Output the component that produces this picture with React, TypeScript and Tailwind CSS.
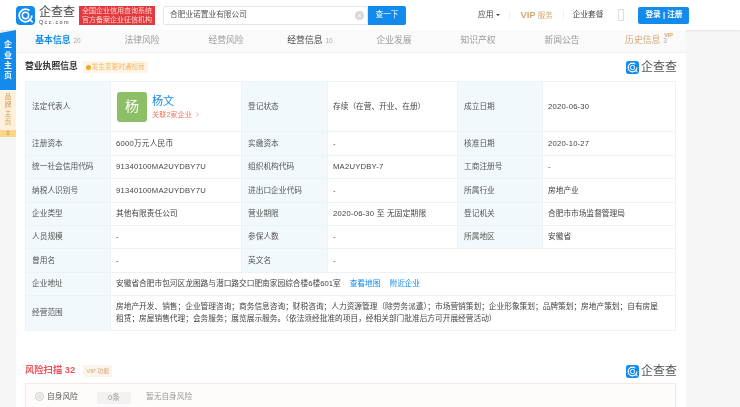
import { ChevronRight } from 'lucide-react';

const FONT = "font-['Liberation_Sans','Noto_Sans_CJK_SC',sans-serif]";

function QccMark({ className }: { className: string }) {
  return (
    <svg viewBox="0 0 24 24" className={className}>
      <rect width="24" height="24" rx="5" fill="#128bed" />
      <circle cx="12" cy="12" r="8" fill="none" stroke="#fff" strokeWidth="2.2" strokeDasharray="42 8" />
      <circle cx="12" cy="12" r="4" fill="none" stroke="#fff" strokeWidth="1.8" />
      <path d="M17 17l3.5 3" stroke="#fff" strokeWidth="2" strokeLinecap="round" />
    </svg>
  );
}

function QccLogo() {
  return (
    <div className="flex items-center gap-[2px]">
      <QccMark className="h-[13px] w-[13px]" />
      <span className="text-[12px] leading-[14px] text-[#555]">企查查</span>
    </div>
  );
}

function Tab({ label, count, active, dark, gold, vip }: { label: string; count?: string; active?: boolean; dark?: boolean; gold?: boolean; vip?: boolean }) {
  let color = 'text-[#9a9a9a]';
  if (active) color = 'text-[#128bed]';
  if (dark) color = 'text-[#444]';
  if (gold) color = 'text-[#d2a878]';
  return (
    <div className="relative flex w-[84px] shrink-0 items-center justify-center gap-[3px]">
      <span className={`text-[8.8px] ${color} ${active ? 'font-bold' : ''}`}>{label}</span>
      {count && <span className="text-[6.5px] text-[#aaa]">{count}</span>}
      {vip && <span className="absolute right-[15px] top-[1px] text-[5.5px] font-bold text-[#d2a878]">VIP</span>}
    </div>
  );
}

function Label({ children }: { children: React.ReactNode }) {
  return (
    <div className="flex items-center border-r border-b border-[#eaf3f8] bg-[#f2f9fc] pl-[6px] text-[#555]">
      {children}
    </div>
  );
}

function Value({ children, span, latin }: { children: React.ReactNode; span?: boolean; latin?: boolean }) {
  return (
    <div className={`flex items-center border-r border-b border-[#eaf3f8] pl-[5px] text-[#444] ${span ? 'col-span-5' : ''} ${latin ? 'tracking-[0.2px]' : ''}`}>
      {children}
    </div>
  );
}

const rows: string[][] = [
  ['注册资本', '6000万元人民币', '实缴资本', '-', '核准日期', '2020-10-27'],
  ['统一社会信用代码', '91340100MA2UYDBY7U', '组织机构代码', 'MA2UYDBY-7', '工商注册号', '-'],
  ['纳税人识别号', '91340100MA2UYDBY7U', '进出口企业代码', '-', '所属行业', '房地产业'],
  ['企业类型', '其他有限责任公司', '营业期限', '2020-06-30 至 无固定期限', '登记机关', '合肥市市场监督管理局'],
  ['人员规模', '-', '参保人数', '-', '所属地区', '安徽省'],
];

export default function App() {
  return (
    <div className={`${FONT} h-[407px] w-[740px] overflow-hidden bg-[#f6f6f6] blur-[0.4px]`}>
      {/* top bar */}
      <header className="flex h-[30px] items-center bg-white shadow-[0_1px_2px_rgba(0,0,0,0.08)]">
        <QccMark className="ml-[16px] h-[19px] w-[19px]" />
        <div className="ml-[4px] flex w-[38px] flex-col">
          <span className="text-[12px] leading-[13px] text-[#444]">企查查</span>
          <span className="text-[5.5px] leading-[6px] tracking-[1.3px] text-[#444]">Qcc.com</span>
        </div>
        <div className="ml-[2px] flex h-[19px] w-[76px] flex-col items-center justify-center whitespace-nowrap bg-[#e4393c] text-[7px] leading-[9.5px] text-[#fcd4d4]">
          <span>全国企业信用查询系统</span>
          <span>官方备案企业征信机构</span>
        </div>
        <div className="ml-[8px] flex h-[19px] w-[205px] items-center justify-between rounded-l-[2px] border border-[#e6e6e6] pl-[6px] pr-[3px] text-[7.7px] text-[#555]">
          合肥业诺置业有限公司
          <span className="flex h-[9px] w-[9px] items-center justify-center rounded-full bg-[#d8d8d8] text-[7px] leading-none text-white">×</span>
        </div>
        <button className="flex h-[19px] w-[38px] items-center justify-center rounded-r-[2px] bg-[#128bed] text-[7.7px] text-white">查一下</button>
        <div className="ml-[72px] flex items-center gap-[3px] text-[7.7px] text-[#444]">
          应用
          <span className="mt-[1px] border-x-[2px] border-t-[2px] border-x-transparent border-t-[#444]" />
        </div>
        <div className="ml-[9px] h-[8px] w-px bg-[#eee]" />
        <div className="ml-[10px] flex items-baseline gap-[2px] text-[#d2a878]">
          <span className="text-[9.5px] font-bold">VIP</span>
          <span className="text-[7.5px]">服务</span>
        </div>
        <div className="ml-[10px] h-[8px] w-px bg-[#eee]" />
        <span className="ml-[9px] text-[7.7px] text-[#444]">企业套餐</span>
        <div className="ml-[15px] h-[12px] w-[6px] rounded-[1px] border border-[#ddd]" />
        <button className="ml-[14px] flex h-[17px] w-[51px] items-center justify-center rounded-[2px] bg-[#128bed] text-[7.7px] font-bold text-white">登录 | 注册</button>
      </header>

      <div className="flex">
        {/* side tabs */}
        <aside className="w-[16px] shrink-0">
          <div className="flex h-[60px] flex-col items-center justify-center bg-[#128bed] pt-[2px] text-[8px] font-bold leading-[10.4px] text-white [clip-path:polygon(0_3px,100%_0,100%_100%,0_100%)]">
            <span>企</span>
            <span>业</span>
            <span>主</span>
            <span>页</span>
          </div>
          <div className="mt-[2px] flex h-[45px] flex-col items-center rounded-b-[2px] bg-[#fdf0dd] pt-[1px] text-[7px] leading-[8.4px] text-[#d39f55]">
            <span>品</span>
            <span>牌</span>
            <span>主</span>
            <span>页</span>
            <span className="mt-[3px] flex h-[7px] w-full items-center justify-center bg-[#fbd58a] text-[5.5px] text-[#b98a3c]">0</span>
          </div>
        </aside>

        <main className="h-[377px] w-[670px] bg-white">
          {/* tabs */}
          <nav className="flex h-[23px] border-b border-[#f0f0f0] bg-[#fafafa]">
            <Tab label="基本信息" count="20" active />
            <Tab label="法律风险" />
            <Tab label="经营风险" />
            <Tab label="经营信息" count="10" dark />
            <Tab label="企业发展" />
            <Tab label="知识产权" />
            <Tab label="新闻公告" />
            <Tab label="历史信息" count="3" gold vip />
          </nav>

          <div className="flex h-[28px] items-center justify-between px-[9px]">
            <div className="flex items-center gap-[5px]">
              <span className="text-[8.8px] font-bold text-[#333]">营业执照信息</span>
              <span className="flex h-[12px] items-center gap-[1px] bg-[#fff5e6] px-[3px] text-[6.6px] text-[#edb868]">
                <span className="h-[5px] w-[5px] rounded-full bg-[#f5a623]" />
                发生变更时通知我
              </span>
            </div>
            <QccLogo />
          </div>

          {/* registration table */}
          <div className="ml-[9px] grid w-[651px] grid-cols-[85px_131px_86px_130px_85px_133px] grid-rows-[50px_24px_23px_24px_23px_23px_24px_23px_35px] border-t border-l border-[#eaf3f8] text-[7.7px]">
            <Label>法定代表人</Label>
            <Value>
              <div className="flex items-center gap-[5px] pl-px">
                <div className="flex h-[30px] w-[30px] items-center justify-center rounded-[3px] bg-[#8cbf66] text-[14px] text-white">杨</div>
                <div className="flex flex-col gap-[2px]">
                  <span className="text-[11px] leading-[13px] text-[#128bed]">杨文</span>
                  <span className="flex items-center text-[7.2px] leading-[9px] text-[#f0785a]">
                    关联2家企业
                    <ChevronRight className="ml-[2px] h-[7px] w-[7px]" />
                  </span>
                </div>
              </div>
            </Value>
            <Label>登记状态</Label>
            <Value>存续（在营、开业、在册）</Value>
            <Label>成立日期</Label>
            <Value latin>2020-06-30</Value>

            {rows.map((row) =>
              row.map((cell, i) =>
                i % 2 === 0 ? (
                  <Label key={row[0] + i}>{cell}</Label>
                ) : (
                  <Value key={row[0] + i} latin={/^[\dA-Z]/.test(cell)}>
                    {cell}
                  </Value>
                ),
              ),
            )}

            <Label>曾用名</Label>
            <Value>-</Value>
            <Label>英文名</Label>
            <div className="col-span-3 flex items-center border-r border-b border-[#eaf3f8] pl-[5px] text-[#444]">-</div>

            <Label>企业地址</Label>
            <Value span>
              安徽省合肥市包河区龙图路与潜口路交口肥南家园综合楼6楼601室
              <span className="ml-[9px] text-[#128bed]">查看地图</span>
              <span className="ml-[9px] text-[#128bed]">附近企业</span>
            </Value>

            <Label>经营范围</Label>
            <Value span>
              <p className="leading-[12px]">
                房地产开发、销售；企业管理咨询；商务信息咨询；财税咨询；人力资源管理（除劳务派遣）；市场营销策划；企业形象策划；品牌策划；房地产策划；自有房屋
                <br />
                租赁；房屋销售代理；会务服务；展览展示服务。（依法须经批准的项目，经相关部门批准后方可开展经营活动）
              </p>
            </Value>
          </div>

          {/* risk scan */}
          <div className="mt-[33px] flex h-[14px] items-center justify-between px-[9px]">
            <div className="flex items-center gap-[8px]">
              <span className="text-[9.3px] font-bold text-[#f0545a]">风险扫描 32</span>
              <span className="flex h-[12px] items-center bg-[#faf4ec] px-[3px] text-[6px] text-[#d2a878]">VIP 功能</span>
            </div>
            <QccLogo />
          </div>
          <div className="ml-[9px] mt-[5px] flex h-[40px] w-[651px] items-start border border-[#fbe6e6] bg-[#fffbfb] pl-[9px] pt-[8px] text-[7.7px]">
            <span className="flex h-[9px] w-[9px] items-center justify-center rounded-full border border-[#ccc]">
              <span className="h-[5px] w-[5px] rounded-full bg-[#e4e4e4]" />
            </span>
            <span className="ml-[3px] w-[50px] leading-[10px] text-[#555]">自身风险</span>
            <span className="flex h-[12px] w-[34px] items-center justify-center bg-[#f2f2f2] text-[#999]">0条</span>
            <span className="ml-[15px] leading-[10px] text-[#999]">暂无自身风险</span>
          </div>
        </main>
      </div>
    </div>
  );
}
